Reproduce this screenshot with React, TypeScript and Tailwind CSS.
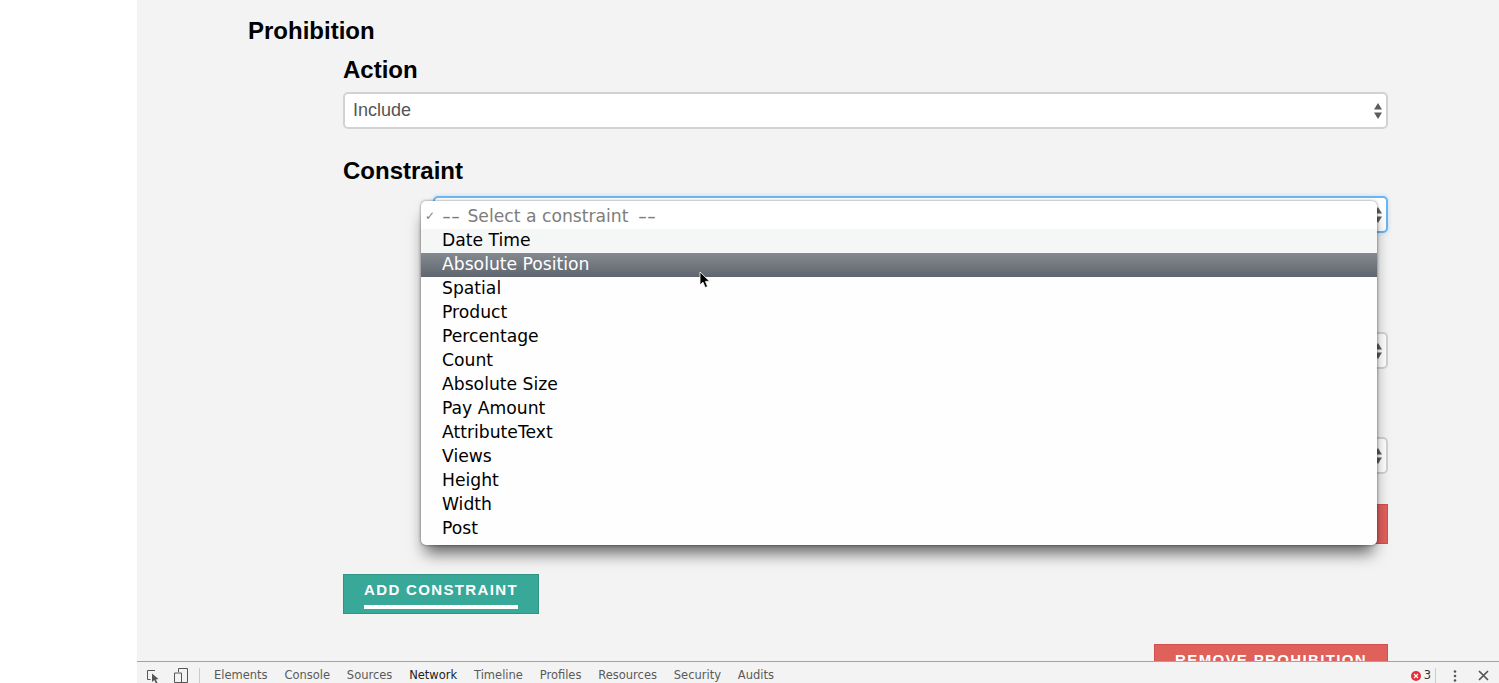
import React from 'react';

const options = ['Date Time', 'Absolute Position', 'Spatial', 'Product', 'Percentage', 'Count', 'Absolute Size', 'Pay Amount', 'AttributeText', 'Views', 'Height', 'Width', 'Post'];
const tabs = ['Elements', 'Console', 'Sources', 'Network', 'Timeline', 'Profiles', 'Resources', 'Security', 'Audits'];

function Arrows() {
  return (
    <svg width="10" height="16" viewBox="0 0 10 16" className="absolute right-[3px] top-[9px] fill-[#5c5c5c]">
      <path d="M5 0 L9 6.5 L1 6.5 Z" />
      <path d="M1 9.5 L9 9.5 L5 16 Z" />
    </svg>
  );
}

function SelectBox({ label, focus, className }: { label?: string; focus?: boolean; className?: string }) {
  return (
    <div
      className={`relative h-[37px] rounded-[5px] border-2 bg-white pl-2 text-[18px] leading-[32px] text-[#555] ${
        focus ? 'border-[#6cb4ee] shadow-[0_0_4px_rgba(108,180,238,0.4)]' : 'border-[#d2d2d2]'
      } ${className ?? ''}`}
    >
      {label}
      <Arrows />
    </div>
  );
}

function ActionButton({ text, color, className }: { text: string; color: string; className?: string }) {
  return (
    <div className={`h-10 border px-[20px] pt-[3px] text-center ${color} ${className ?? ''}`}>
      <span className="inline-block border-b-4 border-white pb-[5px] text-[15px] leading-[20px] font-bold tracking-[1.35px] whitespace-nowrap text-white">
        {text}
      </span>
    </div>
  );
}

export default function App() {
  return (
    <div className="flex h-[683px] w-full overflow-hidden bg-white font-['Liberation_Sans',Arial,sans-serif]">
      <div className="w-[137px] shrink-0" />
      <div className="relative flex min-w-0 flex-1 flex-col">
        <div className="min-h-0 flex-1 overflow-hidden bg-[#f3f3f3] px-[111px] pt-[16px]">
          <h2 className="text-[24px] leading-[30px] font-bold text-black">Prohibition</h2>
          <div className="pt-[9px] pl-[95px]">
            <h3 className="text-[24px] leading-[30px] font-bold text-black">Action</h3>
            <SelectBox label="Include" className="mt-[7px]" />
            <h3 className="mt-[27px] text-[24px] leading-[30px] font-bold text-black">Constraint</h3>
            <div className="mt-[10px] pl-[90px]">
              <SelectBox focus />
              <SelectBox className="mt-[99px]" />
              <SelectBox className="mt-[68px]" />
              <div className="mt-[30px] flex justify-end">
                <div className="h-10 w-[234px] border border-[#d4504c] bg-[#e0605c]" />
              </div>
            </div>
            <ActionButton text="ADD CONSTRAINT" color="border-[#2f9484] bg-[#38a899]" className="mt-[30px] w-[196px]" />
            <div className="mt-[30px] flex justify-end">
              <ActionButton text="REMOVE PROHIBITION" color="border-[#d4504c] bg-[#e0605c]" className="w-[234px]" />
            </div>
          </div>
        </div>

        <div className="flex h-[22px] shrink-0 items-center overflow-hidden border-t border-[#a3a3a3] bg-[#f3f3f3] pt-[6px] font-['DejaVu_Sans',sans-serif] text-[11.5px] text-[#5a5a5a]">
          <svg width="16" height="16" viewBox="0 0 16 16" className="ml-[9px] shrink-0 fill-none stroke-[#555]">
            <path d="M9 2.5 H1.5 V11.5 H4.5" />
            <path d="M6 5.5 L6 14 L8.2 12 L10 15.5 L11.5 14.7 L9.8 11.5 L12.5 11 Z" className="fill-[#555] stroke-none" />
          </svg>
          <svg width="16" height="17" viewBox="0 0 16 17" className="ml-[11px] shrink-0 fill-none stroke-[#555]">
            <path d="M5.5 5 V1.5 H14.5 V15.5 H1.5 V6 H8.5 V15.5" />
          </svg>
          <div className="mr-[14px] ml-[10px] h-4 w-px shrink-0 bg-[#ccc]" />
          <div className="flex gap-[16.8px]">
            {tabs.map((tab) => (
              <span key={tab} className={tab === 'Network' ? 'text-[#222]' : ''}>
                {tab}
              </span>
            ))}
          </div>
          <div className="ml-auto flex items-center">
            <span className="flex h-[10px] w-[10px] items-center justify-center rounded-full bg-[#e0313a]">
              <svg width="6" height="6" viewBox="0 0 6 6" className="stroke-white">
                <path d="M1 1 L5 5 M5 1 L1 5" strokeWidth="1.2" />
              </svg>
            </span>
            <span className="ml-[3px] text-[#333]">3</span>
            <div className="ml-[4px] h-4 w-px bg-[#ccc]" />
            <svg width="4" height="14" viewBox="0 0 4 14" className="ml-[17px] fill-[#555]">
              <circle cx="2" cy="2.5" r="1.3" />
              <circle cx="2" cy="7" r="1.3" />
              <circle cx="2" cy="11.5" r="1.3" />
            </svg>
            <svg width="11" height="11" viewBox="0 0 11 11" className="mr-[10px] ml-[21px] stroke-[#555]">
              <path d="M1 1 L10 10 M10 1 L1 10" strokeWidth="1.7" />
            </svg>
          </div>
        </div>

        {/* native popup menu lying over the form */}
        <div className="absolute top-[201px] left-[284px] w-[956px] rounded-[5px] bg-[#fefefe] py-1 font-['DejaVu_Sans',sans-serif] text-[17.2px] leading-[23px] text-black shadow-[0_12px_16px_-4px_rgba(0,0,0,0.6),0_0_3px_rgba(0,0,0,0.5)]">
          <div className="relative h-6 bg-white pl-[21px] text-[#807c7c]">
            <span className="absolute left-[4px] text-[12px]">✓</span>
            <span className="inline-block w-5 origin-left scale-x-[1.45]">--</span> Select a constraint{' '}
            <span className="ml-1 inline-block w-5 origin-left scale-x-[1.45]">--</span>
          </div>
          {options.map((opt) => (
            <div
              key={opt}
              className={`h-6 pl-[21px] ${
                opt === 'Absolute Position'
                  ? 'bg-gradient-to-b from-[#858a90] to-[#5f666f] text-white'
                  : opt === 'Date Time'
                    ? 'bg-[#f5f6f6]'
                    : ''
              }`}
            >
              {opt}
            </div>
          ))}
        </div>

        {/* mouse pointer */}
        <svg width="12" height="18" viewBox="0 0 12 18" className="absolute top-[271px] left-[562px]">
          <path d="M1 1 L1 14 L4 11.2 L6.2 16.5 L8.6 15.5 L6.4 10.4 L10.5 10.2 Z" fill="#000" stroke="#fff" strokeWidth="0.8" />
        </svg>
      </div>
    </div>
  );
}
